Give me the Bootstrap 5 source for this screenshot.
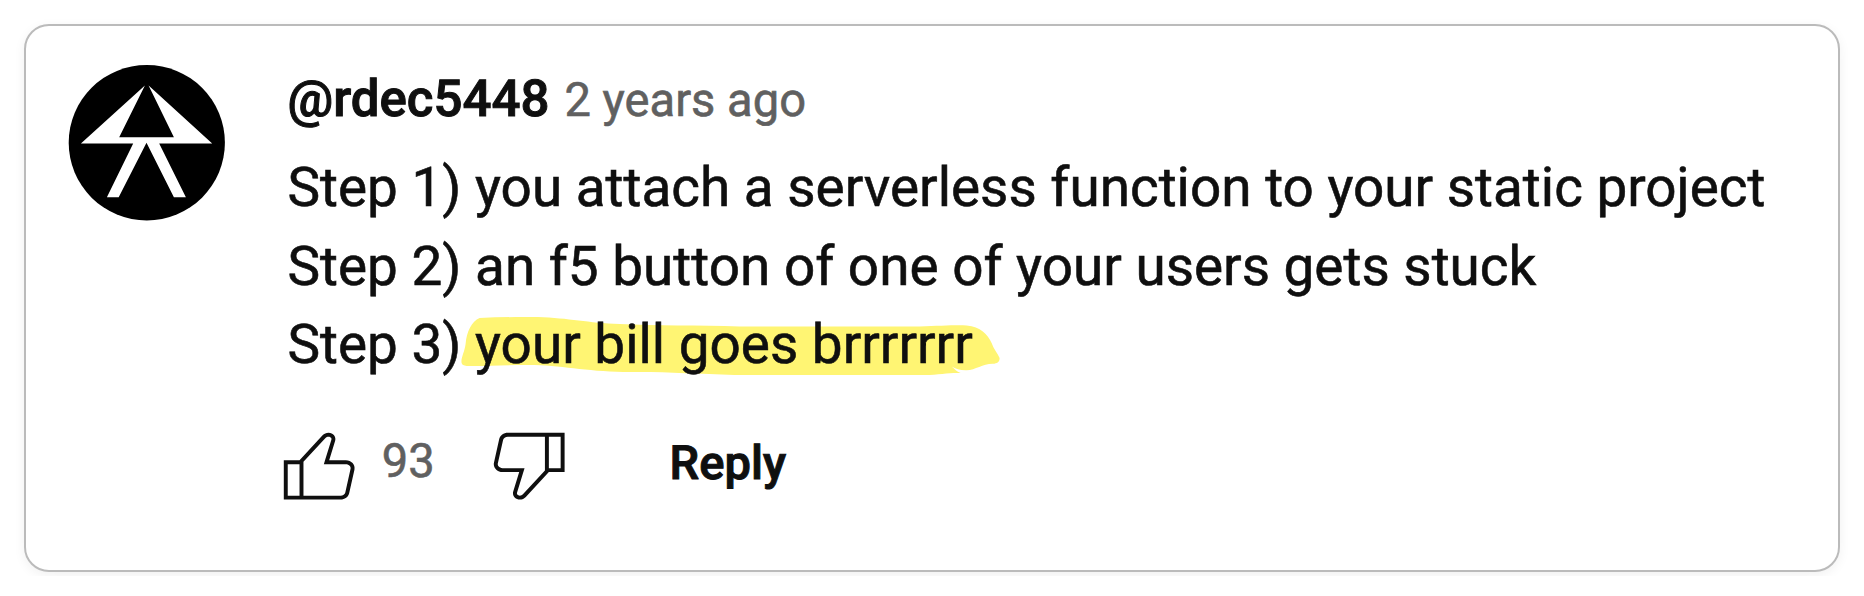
<!DOCTYPE html>
<html lang="en">
<head>
<meta charset="utf-8">
<meta name="viewport" content="width=device-width, initial-scale=1">
<title>Comment</title>
<link href="https://cdn.jsdelivr.net/npm/bootstrap@5.3.0/dist/css/bootstrap.min.css" rel="stylesheet">
<style>
body{font-family:Roboto,"Liberation Sans",sans-serif;color:#0f0f0f;background:#fff;text-rendering:geometricPrecision;-webkit-text-stroke:.6px currentColor}
.stage{height:576px;padding:24px 24px 4px}
.comment-card{height:548px;border:2px solid #bbb;border-radius:25px;padding:38.5px 40px 0 42px;box-shadow:0 3px 12px rgba(0,0,0,.06)}
.avatar{width:156.8px;height:156.8px;margin-right:62.7px}
.comment-head{line-height:70.6px;margin:0 0 13.4px}
.author{font-size:51px;font-weight:500;-webkit-text-stroke-width:1px}
.when{font-size:47.1px;color:#606060;margin-left:15px}
.comment-text{font-size:54.86px;line-height:78.4px;white-space:nowrap;isolation:isolate}
.marker{left:0;top:0;width:1500px;height:236px;z-index:-1}
.actions{margin:32px 0 0 -15.9px;font-size:47.1px;line-height:1.17}
.thumb{width:94.4px;height:94.4px;fill:#0f0f0f}
.likes{color:#606060;margin:0 47.1px 4px 15.8px}
.reply{font-weight:500;margin-left:93.4px;-webkit-text-stroke-width:1px}
</style>
</head>
<body>
<main class="stage overflow-hidden">
  <article class="comment-card d-flex align-items-start bg-white">
    <svg class="avatar flex-shrink-0" viewBox="68.1 64.7 156.8 156.8" aria-hidden="true">
      <ellipse cx="146.9" cy="142.4" rx="78.1" ry="77.7"/>
      <path fill="#fff" d="M145 85.2 81 143.2H133.3L107 197H118.8L146.6 142.5 174 197H186L159.3 143.2H212.3L148.7 85.2 174 137H119.3Z"/>
    </svg>
    <div class="flex-grow-1">
      <header class="comment-head d-flex align-items-baseline">
        <span class="author">@rdec5448</span><span class="when">2 years ago</span>
      </header>
      <div class="comment-text position-relative">
        <svg class="marker position-absolute" viewBox="287.4 149 1500 236" aria-hidden="true">
          <path fill="#fff573" d="M462 363C461 358 465 352 466 344C467 332 472 321 480 318C500 317 520 317 538 317C570 318 588 323 620 324C655 326 700 325 740 326.500H920C940 326 955 325 967 325.500C981 327 988 334 992 343C994 349 998 353 1000 358C1000 362 998 363.500 993 363.800C983 364 976 370 967 370.300C961 370.500 956 369 952 366.500C955 369 957 371.500 961 373C950 372.500 940 374.700 925 375H735C700 374 670 372 640 372C595 373 568 366 535 365C510 364.500 485 366.500 467 366C464 365.500 462.500 365 462 363Z"/>
        </svg>
        <div>Step 1) you attach a serverless function to your static project</div>
        <div>Step 2) an f5 button of one of your users gets stuck</div>
        <div>Step 3) your bill goes brrrrrrr</div>
      </div>
      <footer class="actions d-flex align-items-center">
        <svg class="thumb" viewBox="0 0 24 24" role="img" aria-label="Like"><path d="M18.77,11h-4.23l1.52-4.94C16.38,5.03,15.54,4,14.38,4c-0.58,0-1.14,0.24-1.52,0.65L7,11H3v10h4h1h9.43c1.06,0,1.98-0.67,2.19-1.61l1.34-6C21.23,12.15,20.18,11,18.77,11z M7,20H4v-8h3V20z M19.98,13.17l-1.34,6C18.54,19.65,18.03,20,17.43,20H8v-8.61l5.6-6.06C13.79,5.12,14.08,5,14.38,5c0.26,0,0.5,0.11,0.63,0.3c0.07,0.1,0.15,0.26,0.09,0.47l-1.52,4.94L13.18,12h1.35h4.23c0.41,0,0.8,0.17,1.03,0.46C19.92,12.61,20.05,12.86,19.98,13.17z"/></svg>
        <span class="likes">93</span>
        <svg class="thumb" viewBox="0 0 24 24" role="img" aria-label="Dislike"><path d="M17,4h-1H6.57C5.5,4,4.59,4.67,4.38,5.61l-1.34,6C2.77,12.85,3.82,14,5.23,14h4.23l-1.52,4.94C7.62,19.97,8.46,21,9.62,21c0.58,0,1.14-0.24,1.52-0.65L17,14h4V4H17z M10.4,19.67C10.21,19.88,9.92,20,9.62,20c-0.26,0-0.5-0.11-0.63-0.3c-0.07-0.1-0.15-0.26-0.09-0.47l1.52-4.94L10.82,13H9.46H5.23c-0.41,0-0.8-0.17-1.03-0.46c-0.12-0.15-0.25-0.4-0.18-0.72l1.34-6C5.46,5.35,5.97,5,6.57,5H16v8.61L10.4,19.67z M20,13h-3V5h3V13z"/></svg>
        <span class="reply">Reply</span>
      </footer>
    </div>
  </article>
</main>
<script src="https://cdn.jsdelivr.net/npm/bootstrap@5.3.0/dist/js/bootstrap.bundle.min.js"></script>
</body>
</html>
